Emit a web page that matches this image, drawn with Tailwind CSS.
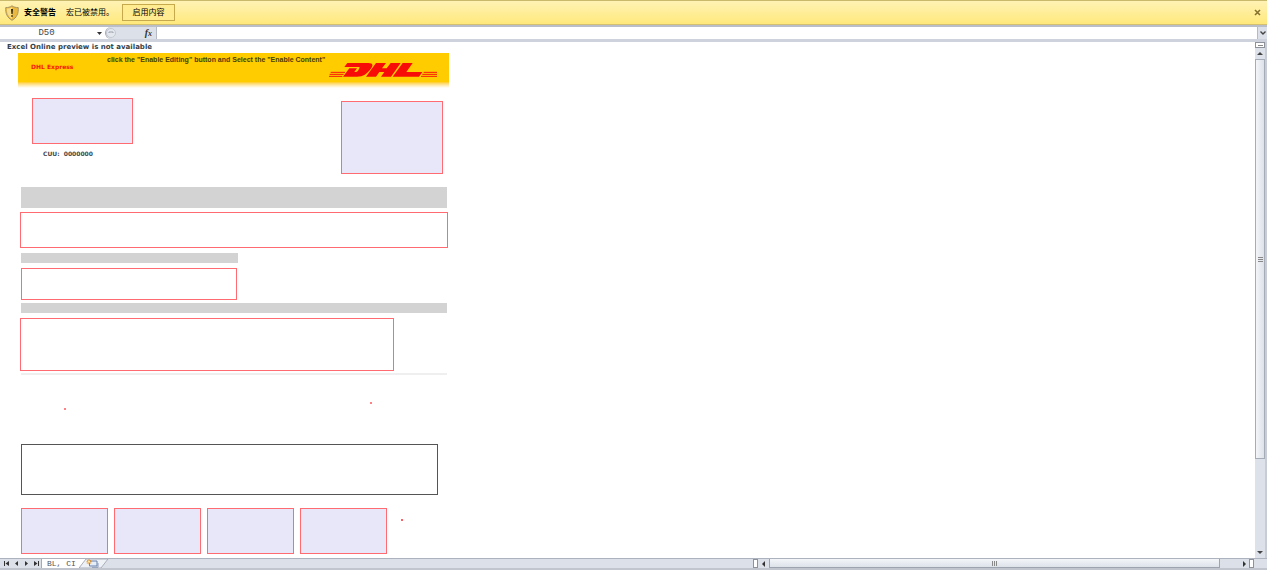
<!DOCTYPE html>
<html lang="zh-CN">
<head>
    <meta charset="UTF-8">
    <meta name="viewport" content="width=device-width, initial-scale=1.0">
    <title>BL, CI</title>
    <script src="https://cdn.jsdelivr.net/npm/@tailwindcss/browser@4"></script>
</head>
<body class="h-screen flex flex-col overflow-hidden bg-white font-['Liberation_Sans','Noto_Sans_CJK_SC',sans-serif] text-[8px] leading-none text-black">

    <!-- Security warning -->
    <header class="flex h-[25px] shrink-0 items-center border-t border-b border-t-[#c9b96a] border-b-[#d3c070] bg-linear-to-b from-[#fff2b4] to-[#ffe97a] pl-1 pr-[5px]">
        <svg class="h-4 w-4" viewBox="0 0 16 16" aria-hidden="true">
            <path d="M8 .8C6.200 2.200 4 2.600 1.800 2.500 1.200 8 3.200 12.800 8 15.300c4.800-2.500 6.800-7.300 6.200-12.800C12 2.600 9.800 2.200 8 .8z" fill="#e9b93f" stroke="#a89668" stroke-width="1"/>
            <path d="M8 2.200C6.500 3.200 4.700 3.600 2.900 3.600 2.700 8 4.300 11.800 8 14z" fill="#f6dd8c"/>
            <path d="M7 4h2l-.4 5H7.400zM7.200 10.200h1.600v1.600H7.200z" fill="#33290f"/>
        </svg>
        <strong class="ml-1 whitespace-nowrap">安全警告</strong>
        <span class="ml-[10px] whitespace-nowrap">宏已被禁用。</span>
        <button class="ml-2 h-[17px] w-[53px] border border-[#c6a94c] bg-[#ffec90] whitespace-nowrap">启用内容</button>
        <button class="ml-auto p-px" aria-label="关闭">
            <svg class="h-[7px] w-[7px]" viewBox="0 0 7 7"><path d="M1 1l5 5M6 1L1 6" stroke="#85712c" stroke-width="1.600"/></svg>
        </button>
    </header>

    <!-- Formula bar -->
    <div class="flex h-[17px] shrink-0 border-t-2 border-b-3 border-t-[#b9bec8] border-b-[#cdd2dc] bg-[#dce1e9]">
        <input aria-label="名称框" value="D50" class="w-[93px] bg-white text-center font-['Liberation_Mono',monospace] text-[9px] text-[#444]">
        <button class="flex w-3 items-center justify-center bg-white" aria-label="名称列表">
            <svg class="h-[3px] w-[5px]" viewBox="0 0 5 3"><path d="M0 0h5L2.500 3z" fill="#333"/></svg>
        </button>
        <div class="w-[51px] bg-white">
            <div class="flex h-full items-center justify-between rounded-l-full border-l border-[#a4abb6] bg-[#dce1e9] pr-1">
                <svg class="h-[10px] w-[10px]" viewBox="0 0 10 10" aria-hidden="true">
                    <circle cx="5" cy="5" r="4.500" fill="#e4e8ee" stroke="#c3c8d0"/>
                    <path d="M3 5V4h4v1" fill="none" stroke="#9ba1ab"/>
                </svg>
                <button class="font-['Liberation_Serif',serif] text-[10px] font-bold italic text-[#333]" aria-label="插入函数">f<span class="text-[8px]">x</span></button>
            </div>
        </div>
        <input aria-label="编辑栏" class="min-w-0 flex-1 border-l border-[#b5bac4] bg-white">
        <button class="flex w-[10px] items-center justify-center border-l border-[#b5bac4]" aria-label="展开编辑栏">
            <svg class="h-1 w-[6px]" viewBox="0 0 6 4"><path d="M.5.5L3 3 5.500.5" fill="none" stroke="#444" stroke-width="1.400"/></svg>
        </button>
    </div>

    <div class="flex min-h-0 flex-1">
        <!-- Sheet -->
        <main class="min-w-0 flex-1 overflow-hidden">
            <p class="h-[11px] pl-[7px] pt-[2px] font-['DejaVu_Sans',sans-serif] text-[7px] font-bold whitespace-nowrap text-[#34424c]">Excel Online preview is not available</p>

            <div class="ml-[18px] w-[431px]">
                <div class="flex h-[35px] bg-linear-to-b from-[#ffcc00] from-83% to-white">
                    <span class="ml-[13px] mt-[11px] w-[76px] font-['DejaVu_Sans',sans-serif] text-[6px] font-bold whitespace-nowrap text-[#f81808]">DHL Express</span>
                    <span class="mt-[3px] w-[222px] text-[7px] font-bold whitespace-nowrap text-[#4a3c00]">click the "Enable Editing" button and Select the "Enable Content"</span>
                    <svg class="mt-[10px] h-[14px] w-[108px]" viewBox="0 0 324 42" role="img" aria-label="DHL">
                        <g fill="#f80c08">
                            <path d="M55 0H118C134 0 132 9 125 18C113 33 104 41 84 41H42L61 16H84L76 27H80Q84 27 87 23L91 16Q94 12 89 12H46z"/>
                            <path d="M141 0H171L159 16H173L185 0H215L186 41H156L166 27H151L141 41H111z"/>
                            <path d="M221 0H251L232 27H280L270 41H191z"/>
                        </g>
                        <path d="M5 28H48M2 34H44M0 40H40M284 28H324M280 34H324M276 40H324" stroke="#f81808" stroke-width="3"/>
                    </svg>
                </div>

                <div class="flex h-[99px] items-start justify-between pl-[14px] pr-[6px] pt-[10px]">
                    <div>
                        <div class="h-[46px] w-[101px] border border-[#ff6b70] bg-[#e8e7fa]"></div>
                        <p class="ml-[11px] mt-[7px] font-['DejaVu_Sans',sans-serif] text-[6px] font-bold whitespace-pre text-[#41484c]">CUU:  0000000</p>
                    </div>
                    <div class="mt-[3px] h-[73px] w-[102px] border border-[#ff6b70] bg-[#e8e7fa]"></div>
                </div>

                <div class="ml-[3px] h-[21px] w-[426px] bg-[#d3d3d3]"></div>
                <div class="ml-[2px] mt-1 h-9 w-[428px] border border-[#ff6b70]"></div>
                <div class="ml-[3px] mt-[5px] h-[10px] w-[217px] bg-[#d3d3d3]"></div>
                <div class="ml-[3px] mt-[5px] h-8 w-[216px] border border-[#ff6b70]"></div>
                <div class="ml-[3px] mt-[3px] h-[10px] w-[426px] bg-[#d3d3d3]"></div>
                <div class="ml-[2px] mt-[5px] h-[53px] w-[374px] border border-[#ff6b70]"></div>
                <div class="ml-[3px] mt-[2px] h-[2px] w-[426px] bg-[#efefef]"></div>

                <div class="flex h-[69px] items-start justify-between pl-[46px] pr-[77px] pt-[27px]">
                    <i class="mt-[6px] h-[2px] w-[2px] bg-[#ff8085]"></i>
                    <i class="h-[2px] w-[2px] bg-[#ff8085]"></i>
                </div>

                <div class="ml-[3px] h-[51px] w-[417px] border border-[#555]"></div>

                <div class="ml-[3px] mt-[13px] flex items-start gap-[6px]">
                    <div class="h-[46px] w-[87px] border border-[#ff6b70] bg-[#e8e7fa]"></div>
                    <div class="h-[46px] w-[87px] border border-[#ff6b70] bg-[#e8e7fa]"></div>
                    <div class="h-[46px] w-[87px] border border-[#ff6b70] bg-[#e8e7fa]"></div>
                    <div class="h-[46px] w-[87px] border border-[#ff6b70] bg-[#e8e7fa]"></div>
                    <i class="ml-2 mt-[11px] h-[2px] w-[2px] bg-[#ff6065]"></i>
                </div>
            </div>
        </main>

        <!-- Vertical scrollbar -->
        <aside class="flex w-3 shrink-0 flex-col border-r-2 border-[#c8ccd5] bg-[#dce1ea]">
            <div class="flex h-[6px] items-center justify-center border border-[#8d929b] bg-white"><i class="h-px w-[5px] bg-[#888]"></i></div>
            <button class="flex h-[11px] items-center justify-center" aria-label="向上滚动">
                <svg class="h-[3px] w-[6px]" viewBox="0 0 6 3"><path d="M0 3h6L3 0z" fill="#444"/></svg>
            </button>
            <div class="flex flex-[400] flex-col items-center justify-center gap-px border border-[#a5abb7] bg-linear-to-r from-[#f3f5f8] to-[#dde2ea]">
                <i class="h-px w-[5px] bg-[#888]"></i>
                <i class="h-px w-[5px] bg-[#888]"></i>
                <i class="h-px w-[5px] bg-[#888]"></i>
            </div>
            <div class="flex-[88]"></div>
            <button class="flex h-[11px] items-center justify-center" aria-label="向下滚动">
                <svg class="h-[3px] w-[6px]" viewBox="0 0 6 3"><path d="M0 0h6L3 3z" fill="#444"/></svg>
            </button>
        </aside>
    </div>

    <!-- Sheet tabs and horizontal scrollbar -->
    <footer class="flex h-3 shrink-0 border-t border-b-2 border-t-[#adb3be] border-b-[#c0c5ce] bg-[#dce1e9]">
        <div class="flex w-[753px] shrink-0">
            <nav class="flex w-[42px] items-center justify-around border-r border-[#a5abb7] pl-px">
                <button aria-label="第一张"><svg class="h-[5px] w-[5px]" viewBox="0 0 5 5"><path d="M0 0h1v5H0zM5 0v5L1.500 2.500z" fill="#333"/></svg></button>
                <button aria-label="上一张"><svg class="h-[5px] w-[5px]" viewBox="0 0 5 5"><path d="M4 0v5L1 2.500z" fill="#333"/></svg></button>
                <button aria-label="下一张"><svg class="h-[5px] w-[5px]" viewBox="0 0 5 5"><path d="M1 0v5l3-2.500z" fill="#333"/></svg></button>
                <button aria-label="最后一张"><svg class="h-[5px] w-[5px]" viewBox="0 0 5 5"><path d="M4 0h1v5H4zM0 0v5l3.500-2.500z" fill="#333"/></svg></button>
            </nav>
            <button class="bg-white pl-[5px] pr-[3px] font-['Liberation_Mono',monospace] whitespace-nowrap text-[#555]">BL, CI</button>
            <button aria-label="插入工作表">
                <svg class="h-[9px] w-[30px]" viewBox="0 0 30 9">
                    <path d="M0 0h7L0 9z" fill="#fff"/>
                    <path d="M0 9L7 0H29L22 9z" fill="#eef1f5" stroke="#9aa1ad" stroke-width=".8"/>
                    <path d="M10.500 2h7.500v5h-7.500z" fill="#e5edf8" stroke="#6880ac"/>
                    <path d="M13 8.300h6V4" fill="none" stroke="#8b9bbb"/>
                    <path d="M10 .3v5M7.500 2.800h5M8.300 1.100l3.400 3.400M11.700 1.100L8.300 4.500" stroke="#e08a18" stroke-width="1"/>
                    <circle cx="10" cy="2.800" r="1" fill="#fff0b0"/>
                </svg>
            </button>
        </div>
        <div class="flex min-w-0 flex-1">
            <i class="h-full w-[5px] border border-[#8d929b] bg-white"></i>
            <button class="flex w-[11px] items-center justify-center" aria-label="向左滚动">
                <svg class="h-[6px] w-[3px]" viewBox="0 0 3 6"><path d="M3 0v6L0 3z" fill="#333"/></svg>
            </button>
            <div class="flex flex-[451] items-center justify-center gap-px border border-t-0 border-[#9da3af] bg-linear-to-b from-[#f3f5f8] to-[#dde2ea]">
                <i class="h-[5px] w-px bg-[#888]"></i>
                <i class="h-[5px] w-px bg-[#888]"></i>
                <i class="h-[5px] w-px bg-[#888]"></i>
            </div>
            <div class="flex-[19]"></div>
            <button class="flex w-[10px] items-center justify-center" aria-label="向右滚动">
                <svg class="h-[6px] w-[3px]" viewBox="0 0 3 6"><path d="M0 0v6l3-3z" fill="#333"/></svg>
            </button>
            <i class="h-full w-[5px] border border-[#8d929b] bg-white"></i>
            <div class="w-[13px]"></div>
        </div>
    </footer>
</body>
</html>
